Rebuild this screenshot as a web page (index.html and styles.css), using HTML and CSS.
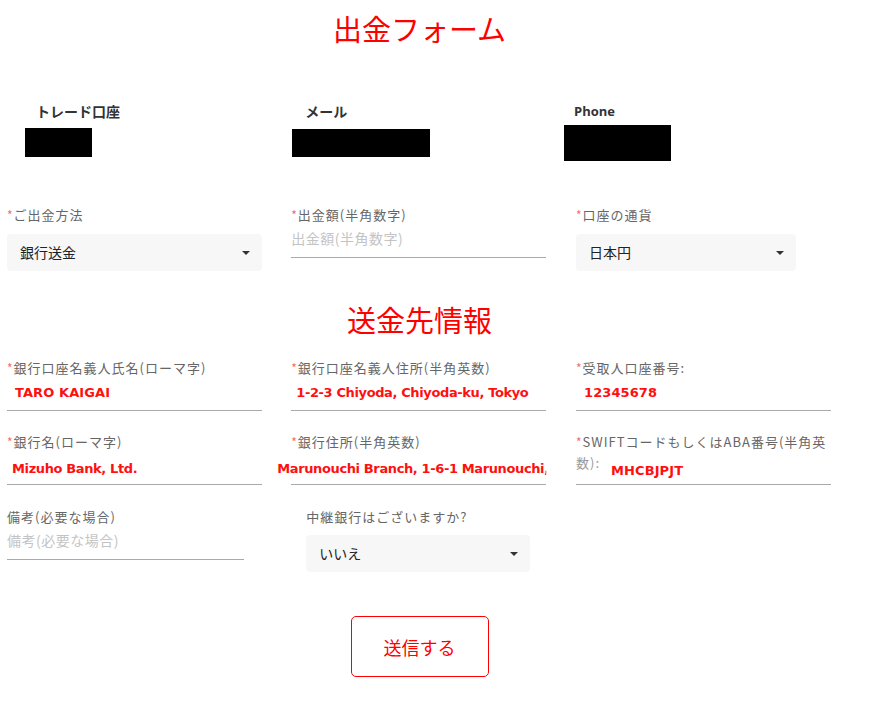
FILE: index.html
```html
<!DOCTYPE html>
<html lang="ja">
<head>
<meta charset="utf-8">
<title>出金フォーム</title>
<link rel="stylesheet" href="styles.css">
</head>
<body>
<div class="page">
  <h1 class="title">出金フォーム</h1>

  <div class="grid info">
    <div class="info-col c1">
      <div class="info-label">トレード口座</div>
      <div class="mask"></div>
    </div>
    <div class="info-col c2">
      <div class="info-label">メール</div>
      <div class="mask"></div>
    </div>
    <div class="info-col c3">
      <div class="info-label latin">Phone</div>
      <div class="mask"></div>
    </div>
  </div>

  <div class="grid row2">
    <div class="field">
      <div class="label"><span class="req">*</span>ご出金方法</div>
      <div class="select"><span>銀行送金</span><i class="caret"></i></div>
    </div>
    <div class="field">
      <div class="label"><span class="req">*</span>出金額(半角数字)</div>
      <div class="input ph-input"><span class="ph">出金額(半角数字)</span></div>
    </div>
    <div class="field">
      <div class="label"><span class="req">*</span>口座の通貨</div>
      <div class="select narrow"><span>日本円</span><i class="caret"></i></div>
    </div>
  </div>

  <h2 class="title sub">送金先情報</h2>

  <div class="grid row3">
    <div class="field">
      <div class="label"><span class="req">*</span>銀行口座名義人氏名(ローマ字)</div>
      <div class="input pl8"><span class="val caps">TARO KAIGAI</span></div>
    </div>
    <div class="field">
      <div class="label"><span class="req">*</span>銀行口座名義人住所(半角英数)</div>
      <div class="input pl5"><span class="val">1-2-3 Chiyoda, Chiyoda-ku, Tokyo</span></div>
    </div>
    <div class="field">
      <div class="label"><span class="req">*</span>受取人口座番号:</div>
      <div class="input pl8"><span class="val caps">12345678</span></div>
    </div>
  </div>

  <div class="grid row4">
    <div class="field">
      <div class="label"><span class="req">*</span>銀行名(ローマ字)</div>
      <div class="input pl5"><span class="val">Mizuho Bank, Ltd.</span></div>
    </div>
    <div class="field">
      <div class="label"><span class="req">*</span>銀行住所(半角英数)</div>
      <div class="input clipped"><span class="val shift">Marunouchi Branch, 1-6-1 Marunouchi,</span></div>
    </div>
    <div class="field">
      <div class="label"><span class="req">*</span>SWIFTコードもしくはABA番号(半角英</div>
      <div class="input swift"><span class="cont">数):</span><span class="val caps">MHCBJPJT</span></div>
    </div>
  </div>

  <div class="grid row5">
    <div class="field">
      <div class="label">備考(必要な場合)</div>
      <div class="input ph-input short"><span class="ph">備考(必要な場合)</span></div>
    </div>
    <div class="field indent">
      <div class="label">中継銀行はございますか?</div>
      <div class="select mid"><span>いいえ</span><i class="caret"></i></div>
    </div>
  </div>

  <div class="actions">
    <button class="submit" type="button">送信する</button>
  </div>
</div>
</body>
</html>
```

FILE: styles.css
```css
* { box-sizing: border-box; }

body {
  margin: 0;
  background: #fff;
  font-family: "Noto Sans CJK JP", "Noto Sans", sans-serif;
  color: #333;
}

.page {
  width: 825px;
  margin-left: 7px;
}

.title {
  margin: 0;
  padding-top: 8px;
  font-size: 29px;
  font-weight: 400;
  line-height: 40px;
  color: #ff0000;
  text-align: center;
}

.title.sub {
  padding-top: 0;
  margin-top: 28px;
  padding-bottom: 1px;
}

.grid {
  display: grid;
  grid-template-columns: 254.5px 255px 255px;
  column-gap: 29.75px;
  align-items: start;
}

/* account info row */
.info { margin-top: 53px; }

.info-label {
  font-size: 14px;
  font-weight: 700;
  line-height: 20px;
  color: #333;
}

.info-label.latin {
  font-family: "Open Sans", sans-serif;
  font-size: 13px;
}

.mask { background: #000; }

.c1 .info-label { padding-left: 29px; }
.c1 .mask { width: 67px; height: 29px; margin: 7px 0 0 18px; }

.c2 .info-label { padding-left: 14px; }
.c2 .mask { width: 138px; height: 28px; margin: 8px 0 0 1px; }

.c3 .info-label { margin-left: -2px; }
.c3 .mask { width: 107px; height: 36px; margin: 4px 0 0 -12px; }

/* form rows */
.row2 { margin-top: 44px; }
.row3 { margin-top: 18px; }
.row4 { margin-top: 21px; }
.row5 { margin-top: 22px; }

.label {
  font-size: 13px;
  line-height: 20px;
  height: 20px;
  color: #666;
  letter-spacing: 1px;
  white-space: nowrap;
}

.req {
  color: #f56c6c;
  font-size: 12px;
  letter-spacing: 0;
  margin-right: 1px;
}

.select {
  margin-top: 9px;
  height: 37px;
  background: #f7f7f7;
  border-radius: 4px;
  display: flex;
  align-items: center;
  justify-content: space-between;
  padding: 0 12px 2px 13px;
  font-size: 14px;
  line-height: 20px;
  color: #222;
}

.select.narrow { width: 220px; }
.select.mid { width: 224px; margin-top: 8px; }

.caret {
  width: 0;
  height: 0;
  margin-top: 2px;
  border-left: 4px solid transparent;
  border-right: 4px solid transparent;
  border-top: 4px solid #333;
}

.indent { padding-left: 15px; }

.input {
  height: 33px;
  border-bottom: 1px solid #aaa;
  display: flex;
  align-items: flex-start;
  padding-top: 5px;
  line-height: 20px;
}

.row4 .input { padding-top: 7px; }

.row4 .input.swift { padding-top: 0; }

.cont {
  width: 35px;
  flex: none;
  font-size: 13px;
  line-height: 21px;
  letter-spacing: 1px;
  color: #999;
}

.swift .val { margin-top: 9px; }

.input.ph-input { padding-top: 3px; }
.input.short { width: 237px; }

.pl5 { padding-left: 5px; }
.pl8 { padding-left: 8px; }

.ph {
  font-size: 14px;
  color: #c4c4c4;
  letter-spacing: 0.5px;
  white-space: nowrap;
}

.val {
  font-family: "DejaVu Sans", "Liberation Sans", sans-serif;
  font-weight: 700;
  font-size: 13px;
  color: #ff1010;
  letter-spacing: -0.38px;
  white-space: nowrap;
}

.val.caps { letter-spacing: 0.1px; }

.clipped {
  clip-path: inset(-10px 0 -10px -30px);
}

.val.shift { margin-left: -14px; }

.actions {
  display: flex;
  justify-content: center;
  margin-top: 44px;
}

.submit {
  width: 138px;
  height: 61px;
  border: 1px solid #ff0000;
  border-radius: 5px;
  background: #fff;
  color: #ff0000;
  font-family: "Noto Sans CJK JP", sans-serif;
  font-size: 18px;
}
```
